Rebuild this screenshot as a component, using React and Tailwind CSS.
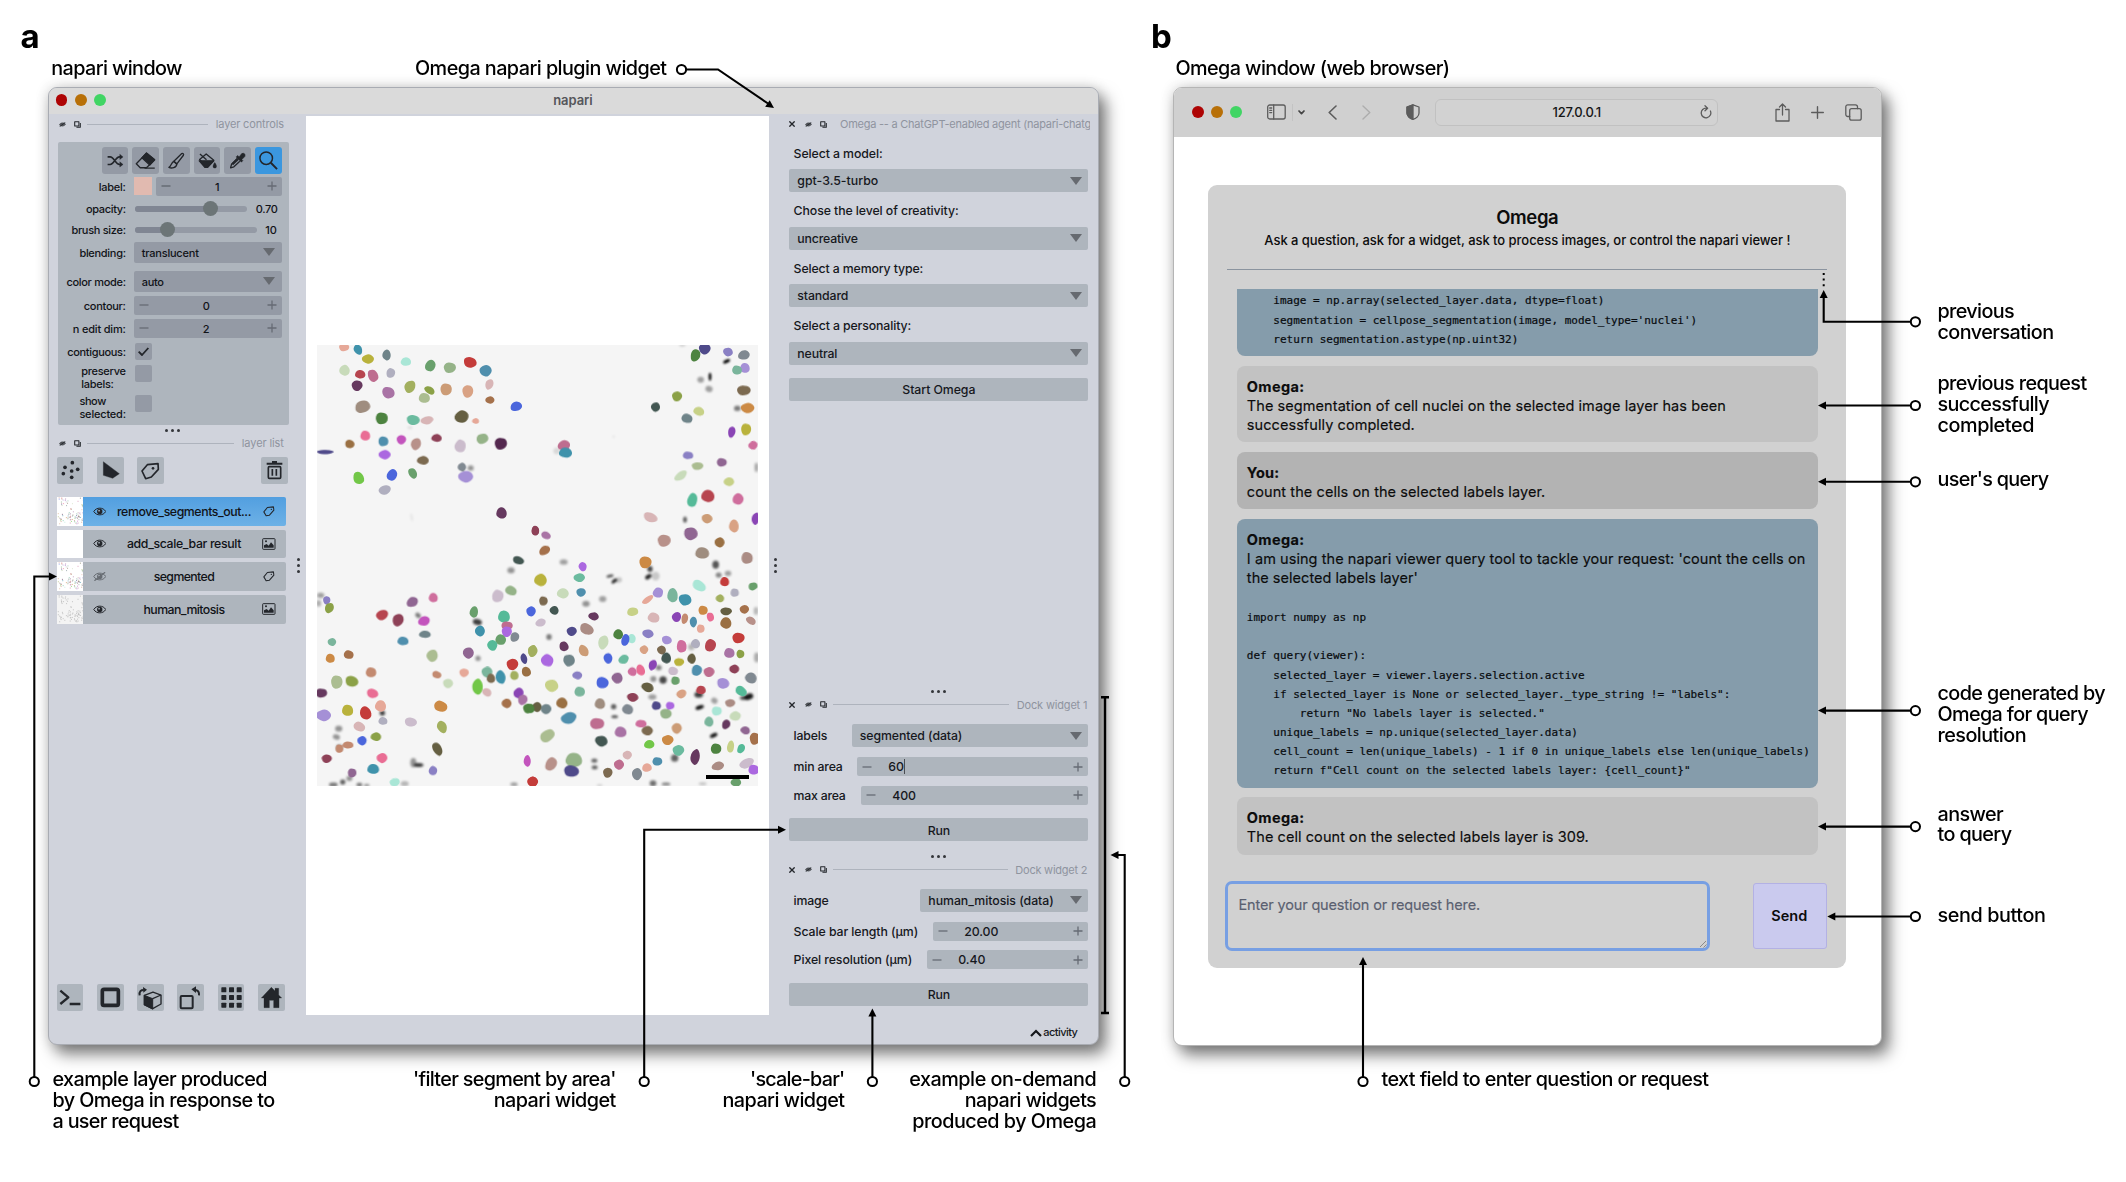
import { useLayoutEffect, useRef, useState } from "react";

const PALETTE = {
  a: "#e6a898", b: "#3f92ab", c: "#b9b23c", d: "#6f8489", e: "#a9e6d6", f: "#69a06c", g: "#95b388",
  h: "#c43c3a", i: "#4f8fad", j: "#c8dbba", k: "#b7454f", l: "#be6d8f", m: "#b0afbf", n: "#66395f",
  o: "#a973a5", p: "#a3b05f", q: "#8ba147", r: "#cc9c76", s: "#d9a284", t: "#d8b5b6", u: "#a5714b",
  v: "#4b66dc", w: "#9f8d7f", x: "#4d8340", y: "#6bbb9f", z: "#655f42", A: "#e96d94", B: "#c354bd",
  C: "#b8918a", D: "#8e4157", E: "#cbbccc", F: "#54284f", G: "#ab68e0", H: "#7c6a50", I: "#72c748",
  J: "#a590d6", K: "#cc8a45", L: "#c7d187", M: "#435752", N: "#8a80c4", O: "#4f4a8a", P: "#55ba98",
  Q: "#8a45b5", R: "#808991", S: "#9a7043", T: "#906692", U: "#cf6e9d", V: "#abbd91", W: "#c38a70",
  X: "#7ab59c", Y: "#ab8c84",
};

/* Each entry: centre x, centre y, radius x, radius y, rotation, palette key. */
const CELLS_LEFT = `132 52 14 11 0 a;174 59 11 15 -30 b;204 87 17 13 0 c;260 75 12 15 0 d;318 95 15 12 0 e;391 107 14 17 30 f;449 113 17 15 0 g;510 97 18 15 20 h;557 122 17 16 0 i;134 121 15 15 0 j;181 133 15 12 0 k;219 137 14 18 -25 l;272 129 12 14 15 m;171 167 15 15 0 n;265 188 18 16 30 o;330 170 15 18 30 p;389 181 16 10 30 q;373 204 16 14 0 V;438 178 16 17 0 r;503 184 15 18 0 s;568 163 11 15 20 t;570 210 13 10 0 u;649 229 17 13 -20 v;188 230 22 17 -20 w;245 265 17 17 0 x;339 270 18 14 10 y;381 271 18 11 -10 t;485 260 20 17 -15 z;527 273 10 8 0 a;196 317 14 14 0 A;250 334 14 14 0 i;149 342 13 12 20 S;304 329 13 13 0 B;348 342 14 17 20 C;410 324 15 11 0 D;481 348 16 18 15 E;547 326 17 14 -20 g;602 341 17 17 0 F;75 366 23 6 0 O;254 374 17 13 0 G;369 391 17 12 0 H;176 444 15 18 -20 I;276 435 14 17 30 v;338 430 11 16 -30 f;254 480 17 13 -15 m;497 440 21 16 0 J;486 411 12 12 0 R;605 549 15 16 0 n;706 602 11 13 0 D;655 691 16 11 20 M;80 811 10 12 0 N;88 834 12 15 25 q;337 816 17 13 -30 T;400 803 13 13 0 U;633 782 17 13 20 g;593 798 16 18 15 E;246 855 17 14 -20 k;294 870 15 18 20 D;372 873 17 13 -20 B;522 846 12 16 10 f;612 860 17 17 0 P;621 887 16 12 0 l;620 905 14 15 0 G;693 844 13 14 0 v;540 903 14 15 0 b;375 913 17 10 0 d;309 933 16 12 0 i;602 929 15 15 20 f;644 921 12 14 20 R;577 946 14 15 -15 P;96 936 12 11 0 X;397 977 16 17 20 V;91 985 13 13 0 K;146 974 14 12 10 u;505 969 15 16 -25 T;637 1003 16 16 0 h;672 986 9 15 -15 O;697 963 11 17 15 p;679 1025 13 14 -20 S;213 1027 15 14 0 W;410 1034 13 10 20 W;492 1028 13 12 0 a;561 1026 15 15 0 X;602 1041 14 19 -10 b;573 1045 12 13 0 H;643 1036 12 13 0 p;110 1056 16 19 0 V;155 1054 18 15 20 q;444 1060 14 13 10 j;533 1070 15 22 0 I;561 1087 14 11 30 t;656 1089 14 15 30 Q;64 1089 16 13 0 n;217 1090 16 13 20 A;668 1109 13 15 20 o;620 1120 14 13 0 u;242 1128 16 16 0 a;143 1141 16 16 0 c;422 1129 19 15 20 K;686 1135 16 14 0 x;711 1131 12 13 0 z;71 1156 21 16 0 J;197 1149 16 19 -20 h;249 1173 13 11 0 m;178 1190 17 13 25 t;332 1176 17 13 10 E;426 1191 13 18 -25 p;186 1232 13 13 0 v;228 1220 15 12 0 q;144 1245 16 10 0 W;118 1256 11 12 0 W;412 1257 12 20 -30 z;80 1286 14 12 0 D;246 1284 15 14 0 A;682 1293 10 16 0 B;220 1317 17 14 0 b;399 1322 12 13 20 N;156 1329 12 13 0 T;284 1357 14 12 -15 e;698 1355 15 14 0 h`;

const CELLS_RIGHT = `496 76 13 18 15 x;524 56 16 16 0 O;594 66 14 12 20 N;642 75 17 13 -15 R;645 114 14 14 0 J;621 120 14 13 0 X;641 181 19 14 0 H;441 199 14 14 0 q;653 234 19 14 0 K;377 231 13 13 20 M;507 244 16 12 15 L;471 265 16 13 15 d;648 298 14 17 0 c;605 306 10 16 10 Q;669 346 13 12 -15 U;102 346 18 14 -15 l;107 368 19 14 0 b;474 376 15 11 0 N;575 397 14 12 0 T;502 408 16 11 0 V;452 437 20 11 -35 j;597 455 15 12 0 L;534 498 19 17 0 k;487 510 14 20 15 P;624 507 15 16 30 U;361 562 20 13 25 t;531 566 15 13 10 r;677 566 11 17 10 Q;612 588 14 18 0 s;16 602 10 14 0 D;48 616 14 10 25 o;402 632 18 17 0 C;482 611 19 18 20 T;569 637 14 14 0 S;44 661 17 12 -35 u;517 669 20 16 0 w;651 684 16 17 0 Y;346 697 17 17 0 K;158 710 11 13 -20 G;148 743 16 12 0 y;32 750 18 17 0 c;584 755 13 13 0 h;669 769 13 11 -20 f;507 767 20 14 35 e;153 787 13 12 0 i;384 788 15 14 -30 J;99 790 17 14 0 j;428 796 15 20 0 X;614 788 12 12 0 m;40 813 12 13 0 H;353 809 18 8 -35 a;465 809 18 16 20 b;570 805 12 11 0 p;73 841 13 12 20 M;308 845 16 12 -10 L;519 841 13 13 0 K;588 844 16 11 0 z;643 838 13 12 0 u;191 859 15 11 10 n;440 861 13 14 30 Q;371 863 17 14 10 t;541 861 10 13 -15 A;464 866 9 15 10 W;490 876 10 15 0 i;32 878 15 11 -20 E;588 879 16 16 0 S;663 872 15 10 30 C;512 896 11 12 0 a;170 897 20 15 30 Y;125 904 14 13 0 O;354 911 16 12 10 N;265 913 14 14 0 x;305 926 12 13 10 e;286 930 11 17 15 v;625 924 17 15 0 h;410 930 14 12 20 J;220 937 14 20 15 j;497 941 13 13 0 m;102 949 13 14 -20 n;455 949 14 18 0 U;541 946 15 18 20 k;8 963 13 16 0 p;342 959 12 12 0 s;161 962 13 17 -30 r;395 960 13 12 30 H;598 969 15 14 0 o;631 972 11 12 0 q;234 985 12 15 -15 v;281 988 15 12 -25 y;485 986 12 14 0 z;409 984 14 15 0 M;52 991 18 17 25 G;117 991 16 17 -20 d;447 996 14 11 0 c;368 1005 11 15 20 Q;613 1017 14 12 0 D;332 1020 12 16 -20 A;307 1025 13 12 25 U;429 1023 14 12 10 E;500 1021 14 16 20 i;537 1026 15 14 0 l;142 1036 14 11 0 N;262 1044 16 15 20 T;663 1044 17 15 20 R;436 1052 12 12 0 f;217 1058 17 16 20 v;579 1060 17 15 20 J;65 1067 19 17 15 L;353 1072 18 13 20 z;513 1080 14 12 0 k;149 1085 15 14 0 X;633 1083 17 13 40 P;454 1092 14 12 -20 s;308 1102 16 12 10 D;96 1119 16 15 0 S;210 1121 15 15 0 w;379 1127 13 12 0 O;420 1127 12 11 0 G;600 1119 14 11 0 Y;48 1137 15 14 0 d;21 1131 12 13 0 z;3 1136 10 12 0 x;293 1138 16 14 20 R;560 1143 14 13 0 e;407 1151 16 14 10 g;116 1164 22 16 -15 i;616 1158 16 13 -10 j;537 1175 13 14 0 X;333 1181 16 11 0 U;201 1181 20 16 0 l;588 1183 11 14 20 n;440 1195 14 15 0 r;352 1202 16 13 0 H;646 1201 14 11 15 T;272 1206 17 15 0 o;52 1217 22 16 -35 V;674 1226 14 17 0 u;413 1230 16 14 0 K;214 1233 18 15 20 M;358 1243 15 12 -10 I;602 1250 10 17 10 L;558 1256 15 15 0 x;633 1256 10 14 25 P;445 1261 16 15 0 y;292 1275 13 12 0 t;496 1281 13 22 10 n;132 1290 24 20 0 g;382 1294 14 12 0 i;63 1302 15 20 30 C;650 1300 21 13 -25 E;267 1304 14 14 0 l;564 1308 18 12 -15 Y;351 1313 14 12 -15 a;671 1319 15 14 0 G;124 1323 21 16 10 O;233 1328 13 14 0 H;321 1332 14 17 0 R;618 1357 15 12 0 f;8 1355 14 14 0 h`;

/* Unlabelled nuclei: centre x, centre y, radius x, radius y, rotation, opacity. */
const GHOST_LEFT = `512 414 9 8 0 .4;330 293 8 4 0 .1;335 562 3 12 -10 .08;633 721 11 9 0 .4;62 796 11 8 0 .35;56 820 7 10 0 .3;354 856 9 7 40 .5;532 876 14 9 15 .75;534 985 8 8 0 .4;213 1027 8 8 0 .3;247 1149 8 8 0 .75;116 1196 11 9 0 .4;109 1221 11 8 20 .4;118 1252 10 9 0 .4;340 1298 9 14 0 .4;356 1305 14 6 0 .75;148 1345 9 8 0 .4;128 1356 8 8 0 .6;100 1364 13 7 0 .5;178 1364 9 6 0 .5;200 1366 9 4 0 .4;314 1361 12 8 0 .25;642 1363 11 6 0 .35;380 271 12 7 0 .15`;
const GHOST_RIGHT = `457 46 10 4 0 .15;590 94 11 5 -25 1;540 140 4 12 0 1;512 149 10 9 0 .35;537 177 11 9 15 .35;622 235 10 8 0 .5;80 363 10 10 0 .12;251 320 3 3 0 .12;679 412 5 14 0 .35;465 569 6 9 0 .6;101 696 12 8 0 .35;557 704 10 12 0 .65;360 717 8 9 0 .7;355 740 11 6 -35 .85;377 738 12 13 0 .18;240 738 11 4 -15 .7;253 753 10 5 -40 .85;266 750 10 8 -20 .2;594 730 10 8 0 .35;566 735 9 8 0 .45;168 821 11 9 0 .4;218 807 11 9 0 .35;57 921 8 9 0 .5;678 843 7 12 0 .25;484 951 10 10 0 .25;680 982 8 15 0 .3;399 1050 11 11 0 .7;370 1047 9 9 0 .4;386 1013 9 8 0 .45;367 1101 12 8 0 .35;553 1112 10 9 30 .35;506 1094 13 9 0 .75;656 1100 14 9 -20 .9;640 1104 10 6 0 .7;251 1130 8 8 0 .6;254 1160 10 5 0 .6;509 1132 13 6 -20 .95;551 1216 12 6 -25 .9;434 1284 11 11 0 .6;193 1292 9 6 0 .6;194 1312 9 6 0 .6;369 1360 10 9 0 .55;408 1362 13 5 0 .45;518 1361 12 5 0 .2;209 1366 9 4 0 .15`;

const parse = (s) => s.split(";").map((e) => e.trim().split(" "));

function blob(rx, ry, seed) {
  const pts = [];
  const n = 9;
  for (let k = 0; k < n; k++) {
    const t = (k / n) * Math.PI * 2;
    const wob = 1 + 0.07 * Math.sin(seed * 7.3 + k * 2.4);
    pts.push([Math.cos(t) * rx * wob, Math.sin(t) * ry * wob]);
  }
  const mid = (p, q) => [(p[0] + q[0]) / 2, (p[1] + q[1]) / 2];
  const f = (p) => `${p[0].toFixed(1)} ${p[1].toFixed(1)}`;
  let d = `M${f(mid(pts[n - 1], pts[0]))}`;
  for (let k = 0; k < n; k++) d += `Q${f(pts[k])} ${f(mid(pts[k], pts[(k + 1) % n]))}`;
  return d + "Z";
}

function Cells({ data }) {
  return parse(data).map(([x, y, rx, ry, rot, c], k) => (
    <path key={k} d={blob(rx * 1.13, ry * 1.13, k + 1)} fill={PALETTE[c]} transform={`translate(${x} ${y}) rotate(${rot})`} />
  ));
}

function Ghosts({ data }) {
  return parse(data).map(([x, y, rx, ry, rot, o], k) => (
    <ellipse key={k} rx={rx} ry={ry} fill="#000" opacity={o} transform={`translate(${x} ${y}) rotate(${rot})`} />
  ));
}

function Micrograph() {
  return (
    <svg className="block h-[441px] w-[441px] bg-[#f5f5f5]" viewBox="0 0 1323 1323">
      <defs>
        <filter id="soft" x="-10%" y="-10%" width="120%" height="120%"><feGaussianBlur stdDeviation="3.5" /></filter>
      </defs>
      <g transform="translate(-51 -45)"><g filter="url(#soft)"><Ghosts data={GHOST_LEFT} /></g><Cells data={CELLS_LEFT} /></g>
      <g transform="translate(639 -45)"><g filter="url(#soft)"><Ghosts data={GHOST_RIGHT} /></g><Cells data={CELLS_RIGHT} /></g>
      <rect x="1167" y="1290" width="129" height="12" fill="#000" />
    </svg>
  );
}

/* Text run tracked so that it spans exactly `w` pixels. */
function T({ w, className = "", children }) {
  const ref = useRef(null);
  const [track, setTrack] = useState(0);
  useLayoutEffect(() => {
    const el = ref.current;
    el.style.letterSpacing = "0px";
    const natural = el.getBoundingClientRect().width;
    const next = (w - natural) / children.length;
    el.style.letterSpacing = `${next}px`;
    setTrack(next);
  }, [w, children]);
  return (
    <span ref={ref} className={`inline-block whitespace-pre ${className}`} style={{ letterSpacing: `${track}px` }}>
      {children}
    </span>
  );
}

function Dots({ vertical }) {
  return (
    <span className={vertical ? "flex flex-col gap-[3px]" : "flex justify-center gap-[3px]"}>
      <i className="size-[3px] rounded-full bg-[#33353a]" />
      <i className="size-[3px] rounded-full bg-[#33353a]" />
      <i className="size-[3px] rounded-full bg-[#33353a]" />
    </span>
  );
}

function Glyph({ box, className = "size-full", children }) {
  return (
    <svg viewBox={box} className={`block ${className}`} fill="none" stroke="#23262b" strokeWidth="5" strokeLinejoin="round">
      {children}
    </svg>
  );
}

function DockIcons({ close }) {
  return (
    <span className="flex items-center">
      {close && (
        <Glyph box="0 0 18 18" className="mr-[9.4px] size-[6px]"><path d="M1 1L17 17M17 1L1 17" strokeWidth="4" /></Glyph>
      )}
      <Glyph box="0 0 21 15" className="h-[5px] w-[7px]">
        <path d="M1 8C5 1 16 1 20 7C16 14 5 14 1 8Z" fill="#55585e" strokeWidth="1" /><path d="M2 14L19 1" strokeWidth="2.5" />
      </Glyph>
      <Glyph box="0 0 20 20" className="ml-[8.3px] size-[7px]"><rect x="2" y="2" width="12" height="12" strokeWidth="3" /><path d="M7 18H18V6" strokeWidth="3" /></Glyph>
    </span>
  );
}

function DockHeader({ close, title, w, line = true, className = "" }) {
  return (
    <div className={`flex items-center ${className}`}>
      <DockIcons close={close} />
      {line && <i className="ml-[6px] h-px flex-1 bg-[#aeb3bd]" />}
      <span className={line ? "ml-[7.5px] flex pt-[1px] text-[11px] leading-[13px] text-[#8f949f]" : "ml-[13px] flex pt-[1px] text-[11px] leading-[13px] text-[#8f949f]"}>
        <T w={w}>{title}</T>
      </span>
    </div>
  );
}

function Triangle({ className = "" }) {
  return <svg viewBox="0 0 12 8" className={`h-[8px] w-[12px] ${className}`}><path d="M0 0H12L6 8Z" fill="#666a70" /></svg>;
}

function Minus() {
  return <svg viewBox="0 0 10 10" className="size-[10px]"><path d="M.5 5H9.5" stroke="#666b74" strokeWidth="1.3" /></svg>;
}
function Plus() {
  return <svg viewBox="0 0 10 10" className="size-[10px]"><path d="M.5 5H9.5M5 .5V9.5" stroke="#666b74" strokeWidth="1.3" /></svg>;
}

function Row({ label, w, className, children }) {
  return (
    <div className={`flex items-center ${className}`}>
      <span className="flex w-[68px] justify-end pt-[0.7px]"><T w={w}>{label}</T></span>
      <span className="ml-[8px] flex h-full w-[148px] items-center">{children}</span>
    </div>
  );
}

function SmallSelect({ value, w }) {
  return (
    <span className="flex h-full flex-1 items-center justify-between rounded-[2px] bg-[#949aa5] pr-[6.5px] pl-[8px]">
      <T w={w} className="pt-[0.7px]">{value}</T><Triangle />
    </span>
  );
}

function SmallSpin({ value }) {
  return (
    <span className="flex h-full flex-1 items-center justify-between rounded-[2px] bg-[#949aa5] px-[5px]">
      <Minus /><span className="pt-[0.7px] pr-[3px]">{value}</span><Plus />
    </span>
  );
}

function Check({ on }) {
  return (
    <span className="ml-[1px] size-[17px] rounded-[2px] bg-[#949aa5]">
      {on && <Glyph box="0 0 51 51"><path d="M11 26L21 36L40 15" strokeWidth="5.5" /></Glyph>}
    </span>
  );
}

function Slider({ fill, className }) {
  return (
    <span className={`relative ml-[1px] flex h-[6px] items-center rounded-full bg-[#949aa5] ${className}`}>
      <i className={`h-full rounded-full bg-[#808693] ${fill}`} />
      <i className="-ml-[8px] size-[15px] shrink-0 rounded-full bg-[#6c7577]" />
    </span>
  );
}

const TOOLS = [
  ["304 441 81 81", <g key="g" strokeWidth="5"><path d="M321 471H329C340 471 345 494 357 494H363M321 494H329C340 494 345 471 357 471H363" /><path d="M358 463L368 471L358 479ZM358 486L368 494L358 502Z" fill="#23262b" strokeWidth="1" /></g>],
  ["396 441 81 81", <g key="g" strokeWidth="4"><path d="M409 492L440 460L464 480L440 504H421Z" /><path d="M426 474L440 459L465 480L450 496Z" fill="#23262b" /><path d="M434 505H465" /></g>],
  ["488 441 81 81", <g key="g" strokeWidth="4"><path d="M521 484L545 461C548 459 552 462 550 466L530 492Z" /><path d="M521 485C513 487 514 499 506 503C514 507 529 504 530 493Z" /></g>],
  ["580 441 81 81", <g key="g" strokeWidth="4"><path d="M597 479L617 462L640 481L620 502Z" /><path d="M596 483H640L621 503H613Z" fill="#23262b" /><path d="M598 462L618 480" /><path d="M643 488C636 497 636 505 643 505C650 505 650 497 643 488Z" fill="#23262b" strokeWidth="1" /></g>],
  ["672 441 81 81", <g key="g" strokeWidth="4"><path d="M712 476L695 493L692 504L702 501L720 484" /><path d="M709 471L725 487L729 482L726 479L735 470C738 463 733 458 726 461L718 471L714 467Z" fill="#23262b" strokeWidth="2" /><path d="M697 494L715 477" strokeWidth="7" /></g>],
  ["765 441 81 81", <g key="g" strokeWidth="4.5"><circle cx="799" cy="475" r="19" /><path d="M813 489L832 508" strokeWidth="6" /></g>],
];

function LayerControls() {
  return (
    <div className="mt-[8.3px] ml-[9.4px] h-[282.4px] w-[231.3px] rounded-[2px] bg-[#aeb5bd] pt-[4.7px] text-[11px] leading-[12.5px] font-medium text-[#111318]">
      <div className="flex justify-end gap-[4px] pr-[7.3px]">
        {TOOLS.map(([box, art], k) => (
          <span key={k} className={k === 5 ? "size-[26.7px] rounded-[3px] bg-[#3b97df]" : "size-[26.7px] rounded-[3px] bg-[#949aa5]"}>
            <Glyph box={box}>{art}</Glyph>
          </span>
        ))}
      </div>
      <Row label="label:" w={27} className="mt-[3.3px] h-[19px]">
        <i className="h-[18px] w-[18.5px] bg-[#e1bab0]" />
        <span className="ml-[3.7px] flex h-full flex-1"><SmallSpin value="1" /></span>
      </Row>
      <Row label="opacity:" w={39.7} className="mt-[5.2px] h-[15px]">
        <Slider className="w-[112px]" fill="w-[76.7px]" /><T w={22} className="ml-[9px] pt-[0.7px]">0.70</T>
      </Row>
      <Row label="brush size:" w={54.3} className="mt-[6px] h-[15px]">
        <Slider className="w-[122px]" fill="w-[33.5px]" /><T w={11.5} className="ml-[8.5px] pt-[0.7px]">10</T>
      </Row>
      <Row label="blending:" w={46.3} className="mt-[4.8px] h-[21px]"><SmallSelect value="translucent" w={57} /></Row>
      <Row label="color mode:" w={59.3} className="mt-[8px] h-[21px]"><SmallSelect value="auto" w={22} /></Row>
      <Row label="contour:" w={42} className="mt-[4px] h-[19px]"><SmallSpin value="0" /></Row>
      <Row label="n edit dim:" w={53} className="mt-[4px] h-[19px]"><SmallSpin value="2" /></Row>
      <Row label="contiguous:" w={58.5} className="mt-[5px] h-[17px]"><Check on /></Row>
      <div className="mt-[5.5px] flex h-[25px]">
        <span className="flex w-[68px] flex-col items-start pl-[23.5px]"><T w={44.5}>preserve</T><T w={32.5}>labels:</T></span>
        <span className="ml-[8px] flex"><Check /></span>
      </div>
      <div className="mt-[4.2px] flex h-[25px]">
        <span className="flex w-[68px] flex-col items-start pt-[0.7px] pl-[21.7px]"><T w={26.5}>show</T><T w={46.5}>selected:</T></span>
        <span className="ml-[8px] flex"><Check /></span>
      </div>
    </div>
  );
}

function Eye({ off }) {
  return (
    <Glyph box="0 0 40 27" className={off ? "h-[9px] w-[13.5px] opacity-50" : "h-[9px] w-[13.5px]"}>
      <path d="M2 13.5C10 0 30 0 38 13.5C30 27 10 27 2 13.5Z" strokeWidth="3" />
      <circle cx="20" cy="13.5" r="8" fill="#23262b" strokeWidth="0" /><circle cx="18" cy="11" r="2.5" fill="#aeb5bd" strokeWidth="0" />
      {off && <path d="M4 26L36 1" strokeWidth="4" />}
    </Glyph>
  );
}

function TagIcon({ className }) {
  return (
    <Glyph box="0 0 56 50" className={className}>
      <path d="M4 28L21 7L50 4L52 20L31 44L15 47Z" strokeWidth="5" /><circle cx="40" cy="16" r="3.5" fill="#23262b" strokeWidth="0" />
    </Glyph>
  );
}

function PictureIcon() {
  return (
    <Glyph box="0 0 41 36" className="h-[12px] w-[13.7px]">
      <rect x="2" y="2" width="37" height="32" rx="2" strokeWidth="3" />
      <path d="M6 29V22L14 18L20 23L27 13L35 22V29Z" fill="#23262b" strokeWidth="0" /><circle cx="12" cy="10" r="3" fill="#23262b" strokeWidth="0" />
    </Glyph>
  );
}

function Thumb({ kind }) {
  const keys = Object.keys(PALETTE);
  const all = parse(CELLS_LEFT).map((c) => [c[0] - 51, c[1] - 45]).concat(parse(CELLS_RIGHT).map((c) => [+c[0] + 639, c[1] - 45]));
  return (
    <svg viewBox="0 0 1323 1400" preserveAspectRatio="none" className={kind === "gray" ? "h-full w-[26.7px] bg-[#f4f4f4]" : "h-full w-[26.7px] bg-white"}>
      {kind !== "blank" && all.filter((_, k) => k % 3 === 0).map(([x, y], k) => (
        <rect key={k} x={x} y={y} width="52" height="52" opacity=".55" fill={kind === "gray" ? "#a5a5a5" : PALETTE[keys[(k * 7) % keys.length]]} />
      ))}
    </svg>
  );
}

function Layer({ name, w, off, tag, thumb, active }) {
  return (
    <div className="flex h-[28.6px] w-[229.7px]">
      <Thumb kind={thumb} />
      <div className={active
        ? "flex flex-1 items-center rounded-r-[2px] bg-linear-to-b from-[#529fe0] to-[#6db1e6] pr-[10px] pl-[9.7px]"
        : "flex flex-1 items-center rounded-r-[2px] bg-[#aeb5bd] pr-[10px] pl-[9.7px]"}>
        <Eye off={off} />
        <span className="flex flex-1 justify-center pt-[1.2px] pr-[0.8px] text-[12.3px] font-medium text-[#111318]"><T w={w}>{name}</T></span>
        <span className="flex w-[14px] justify-center">{tag ? <TagIcon className="h-[10.5px] w-[11.7px]" /> : <PictureIcon />}</span>
      </div>
    </div>
  );
}

function ToolButton({ box, children, className = "" }) {
  return <span className={`size-[26.7px] rounded-[2px] bg-[#aeb5bd] ${className}`}><Glyph box={box}>{children}</Glyph></span>;
}

function LeftDock() {
  const fill = "#23262b";
  return (
    <div className="flex w-[257.5px] flex-col">
      <DockHeader title="layer controls" w={68} className="h-[20px] pr-[22px] pl-[10.7px]" />
      <LayerControls />
      <div className="flex h-[12.3px] items-center pl-[117px]"><Dots /></div>
      <DockHeader title="layer list" w={42} className="h-[13px] pr-[22px] pl-[10.7px]" />
      <div className="mt-[7px] flex gap-[13.6px] pl-[8.3px]">
        <ToolButton box="0 0 80 80"><g fill={fill} strokeWidth="0"><circle cx="46" cy="17" r="5.5" /><circle cx="24" cy="31" r="5.5" /><circle cx="62" cy="37" r="5.5" /><circle cx="19" cy="50" r="5.5" /><circle cx="44" cy="42" r="5.5" /><circle cx="44" cy="61" r="5.5" /></g></ToolButton>
        <ToolButton box="0 0 80 80"><path d="M19 14L67 50L47 64L19 55Z" fill={fill} strokeWidth="1" /></ToolButton>
        <ToolButton box="0 0 80 80"><path d="M15 42L31 23L63 20L64 37L43 60L26 65Z" /><circle cx="48" cy="34" r="4" fill={fill} strokeWidth="0" /></ToolButton>
        <ToolButton box="0 0 80 80" className="ml-[84px]"><path d="M17 20H64M33 15H48" strokeWidth="6" /><rect x="22" y="29" width="37" height="35" rx="3" /><path d="M34 36V56M46 36V56" strokeWidth="5" /></ToolButton>
      </div>
      <div className="mt-[13.3px] flex flex-col gap-[4.1px] pl-[8.3px]">
        <Layer name="remove_segments_out..." w={134} tag thumb="color" active />
        <Layer name="add_scale_bar result" w={114} thumb="blank" />
        <Layer name="segmented" w={60.5} off tag thumb="color" />
        <Layer name="human_mitosis" w={81} thumb="gray" />
      </div>
      <div className="mt-auto mb-[32.9px] flex gap-[13.6px] pl-[8.3px]">
        <ToolButton box="0 0 80 80"><path d="M10 20L34 40L10 60M38 60H70" strokeWidth="7" /></ToolButton>
        <ToolButton box="0 0 80 80"><rect x="16" y="16" width="48" height="48" rx="5" strokeWidth="11" /></ToolButton>
        <ToolButton box="0 0 80 80"><path d="M22 34L48 24L72 33V60L47 74L22 62Z" strokeWidth="4" /><path d="M22 34L47 44V75L22 62Z" fill={fill} strokeWidth="3" /><path d="M47 44L72 33" strokeWidth="4" /><path d="M8 34C6 22 12 18 20 18" strokeWidth="6" /><path d="M18 9L30 17L19 26Z" fill={fill} strokeWidth="0" /></ToolButton>
        <ToolButton box="0 0 80 80"><rect x="11" y="36" width="36" height="37" rx="3" strokeWidth="6" /><path d="M66 34C67 22 62 19 56 18" strokeWidth="6" /><path d="M57 7L43 16L57 27Z" fill={fill} strokeWidth="0" /></ToolButton>
        <ToolButton box="0 0 80 80"><g fill={fill} strokeWidth="0">{[10, 33, 56].map((y) => [10, 33, 56].map((x) => <rect key={`${x}-${y}`} x={x} y={y} width="15" height="15" rx="2" />))}</g></ToolButton>
        <ToolButton box="0 0 80 80"><path d="M10 42L40 10L51 21V13H62V33L71 42H63V71H47V49H34V71H18V42Z" fill={fill} strokeWidth="1" /></ToolButton>
      </div>
    </div>
  );
}

function Select({ value, w, className = "" }) {
  return (
    <span className={`flex h-[23px] items-center justify-between rounded-[2px] bg-[#aeb5bd] pr-[6.5px] pl-[8px] ${className}`}>
      <T w={w}>{value}</T><Triangle />
    </span>
  );
}

function Spin({ value, w, caret, className = "" }) {
  return (
    <span className={`flex h-[19.3px] items-center rounded-[2px] bg-[#aeb5bd] px-[5px] ${className}`}>
      <Minus /><T w={w} className="ml-[16px]">{value}</T>
      {caret && <i className="h-[15px] w-px bg-[#4a4d52]" />}
      <span className="ml-auto"><Plus /></span>
    </span>
  );
}

function Button({ children, w, className = "" }) {
  return <span className={`flex h-[23px] w-[299px] items-center justify-center rounded-[2px] bg-[#aeb5bd] pt-[1px] ${className}`}><T w={w}>{children}</T></span>;
}

function Field({ label, w, className, children }) {
  return <div className={`flex w-[299px] items-center justify-between pl-[4.3px] ${className}`}><T w={w}>{label}</T>{children}</div>;
}

function RightDock() {
  return (
    <div className="flex flex-1 flex-col pl-[20px] text-[12.3px] leading-[15px] font-medium text-[#16181d]">
      <div className="w-[301px] overflow-hidden font-normal">
        <DockHeader close line={false} title="Omega -- a ChatGPT-enabled agent (napari-chatg" w={251} className="h-[20px]" />
      </div>
      <span className="mt-[11.8px] flex pl-[4.3px]"><T w={89}>Select a model:</T></span>
      <Select value="gpt-3.5-turbo" w={81} className="mt-[8.3px] w-[299px]" />
      <span className="mt-[11.2px] flex pl-[4.3px]"><T w={165}>Chose the level of creativity:</T></span>
      <Select value="uncreative" w={60.5} className="mt-[8.4px] w-[299px]" />
      <span className="mt-[11.4px] flex pl-[4.3px]"><T w={129.5}>Select a memory type:</T></span>
      <Select value="standard" w={51} className="mt-[8.2px] w-[299px]" />
      <span className="mt-[10.9px] flex pl-[4.3px]"><T w={117.5}>Select a personality:</T></span>
      <Select value="neutral" w={40} className="mt-[8.4px] w-[299px]" />
      <Button w={73} className="mt-[13px]">Start Omega</Button>

      <div className="mt-[284.5px] flex h-[13px] w-[299px] items-center justify-center"><Dots /></div>
      <DockHeader close title="Dock widget 1" w={70.5} className="h-[13px] w-[298px] font-normal" />
      <Field label="labels" w={33.5} className="mt-[13.2px]"><Select value="segmented (data)" w={102.5} className="w-[236.5px]" /></Field>
      <Field label="min area" w={49} className="mt-[9.8px]"><Spin value="60" w={15.5} caret className="w-[231px]" /></Field>
      <Field label="max area" w={52} className="mt-[9.2px]"><Spin value="400" w={23.5} className="w-[227px]" /></Field>
      <Button w={22} className="mt-[13.4px]">Run</Button>

      <div className="mt-[9px] flex h-[13px] w-[299px] items-center justify-center"><Dots /></div>
      <DockHeader close title="Dock widget 2" w={72} className="h-[13px] w-[298px] font-normal" />
      <Field label="image" w={35} className="mt-[12.8px]"><Select value="human_mitosis (data)" w={125.5} className="w-[168px]" /></Field>
      <Field label="Scale bar length (µm)" w={124.5} className="mt-[9.6px]"><Spin value="20.00" w={34} className="w-[155px]" /></Field>
      <Field label="Pixel resolution (µm)" w={118.5} className="mt-[9.3px]"><Spin value="0.40" w={27} className="w-[161px]" /></Field>
      <Button w={22} className="mt-[13.3px]">Run</Button>
      <div className="mt-[19px] flex items-center pl-[241px] text-[11px]">
        <svg viewBox="0 0 12 8" className="mt-[2px] h-[8px] w-[12px]"><path d="M1 7L6 2L11 7" fill="none" stroke="#15171b" strokeWidth="2.2" /></svg>
        <T w={34} className="ml-[1px]">activity</T>
      </div>
    </div>
  );
}

function NapariWindow() {
  return (
    <section className="flex h-[957.5px] w-[1051px] flex-col overflow-hidden rounded-[9px] border border-[#a9acb3] bg-[#d0d3dc] shadow-[7px_9px_16px_rgba(0,0,0,0.5),0_0_14px_rgba(0,0,0,0.16)]">
      <header className="flex h-[26px] shrink-0 items-center bg-[#dadada] pb-[1.5px] pl-[6.4px]">
        <i className="size-[11.7px] rounded-full bg-[#ae0404]" />
        <i className="ml-[7.5px] size-[11.7px] rounded-full bg-[#b87008]" />
        <i className="ml-[7.5px] size-[11.7px] rounded-full bg-[#41d564]" />
        <span className="ml-[447.4px] flex text-[13px] font-semibold text-[#55565a]"><T w={39.5}>napari</T></span>
      </header>
      <div className="-mx-px flex flex-1">
        <LeftDock />
        <div className="relative mt-[2px] mb-[29px] flex w-[463.5px] flex-col bg-white pt-[229px] pl-[11.5px]">
          <Micrograph />
          <span className="absolute top-[441.5px] -left-[8.5px]"><Dots vertical /></span>
          <span className="absolute top-[441.5px] -right-[8px]"><Dots vertical /></span>
        </div>
        <RightDock />
      </div>
    </section>
  );
}

function BrowserBar() {
  const s = { fill: "none", stroke: "#5c5c5c", strokeWidth: 1.3, strokeLinecap: "round", strokeLinejoin: "round" };
  return (
    <header className="flex h-[49px] shrink-0 items-center bg-[#d0d0d0] pb-[1px] pl-[17.7px]">
      <i className="size-[12px] rounded-full bg-[#ae0404]" />
      <i className="ml-[7px] size-[12px] rounded-full bg-[#b87008]" />
      <i className="ml-[7px] size-[12px] rounded-full bg-[#41d564]" />
      <svg className="ml-[25px] h-[16px] w-[19px]" viewBox="0 0 19 16" {...s}><rect x=".7" y="1" width="17.5" height="14" rx="2" /><path d="M6.7 1V15M2.7 4H4.7M2.7 6.3H4.7M2.7 8.6H4.7" /></svg>
      <i className="ml-[6.5px] h-[17px] w-px bg-[#c3c3c3]" />
      <svg className="ml-[5px] h-[5px] w-[7px]" viewBox="0 0 7 5" {...s} strokeWidth="1.7" stroke="#444"><path d="M1 1L3.5 3.7L6 1" /></svg>
      <svg className="ml-[23px] h-[15px] w-[9px]" viewBox="0 0 9 15" {...s} strokeWidth="1.6"><path d="M8 1L1.2 7.5L8 14" /></svg>
      <svg className="ml-[25px] h-[15px] w-[9px]" viewBox="0 0 9 15" {...s} strokeWidth="1.4" stroke="#adadad"><path d="M1 1L7.8 7.5L1 14" /></svg>
      <svg className="ml-[34.5px] h-[16px] w-[14px]" viewBox="0 0 14 16" {...s}><path d="M7 .8L13 3V9C13 12 10 14.5 7 15.3C4 14.5 1 12 1 9V3Z" /><path d="M7 .8V15.3C4 14.5 1 12 1 9V3Z" fill="#5c5c5c" /></svg>
      <div className="ml-[15px] flex h-[27px] w-[283px] items-center rounded-[6px] border border-[#c1c1c1] bg-[#d2d2d2] pr-[4.5px]">
        <span className="ml-[116.5px] flex pt-[1.5px] text-[13px] font-medium text-[#151515]"><T w={48.5}>127.0.0.1</T></span>
        <svg className="ml-auto h-[14px] w-[12px]" viewBox="0 0 12 14" {...s}><path d="M10.4 6A4.8 4.8 0 1 1 6.5 3.2M5 .8L7.6 3.2L5 5.8" /></svg>
      </div>
      <svg className="ml-[57px] h-[19px] w-[15px]" viewBox="0 0 15 19" {...s}><path d="M4.5 6.5H1V18H14V6.5H10.5M7.5 12V1M4.5 4L7.5 1L10.5 4" /></svg>
      <svg className="ml-[21px] size-[13px]" viewBox="0 0 13 13" {...s} strokeWidth="1.4"><path d="M.7 6.5H12.3M6.5 .7V12.3" /></svg>
      <svg className="ml-[21.5px] size-[17px]" viewBox="0 0 17 17" {...s}><rect x="4.7" y="4.7" width="11.5" height="11.5" rx="2" /><path d="M4.7 12.5H3A2 2 0 0 1 .8 10.5V3A2 2 0 0 1 3 .8H10.5A2 2 0 0 1 12.5 3V4.7" /></svg>
    </header>
  );
}

const CODE_A = ["    image = np.array(selected_layer.data, dtype=float)", "    segmentation = cellpose_segmentation(image, model_type='nuclei')", "    return segmentation.astype(np.uint32)"];
const CODE_B = [
  "import numpy as np", " ", "def query(viewer):", "    selected_layer = viewer.layers.selection.active",
  "    if selected_layer is None or selected_layer._type_string != \"labels\":", "        return \"No labels layer is selected.\"",
  "    unique_labels = np.unique(selected_layer.data)", "    cell_count = len(unique_labels) - 1 if 0 in unique_labels else len(unique_labels)",
  "    return f\"Cell count on the selected labels layer: {cell_count}\"",
];

function Code({ lines, className = "" }) {
  return (
    <div className={`font-['DejaVu_Sans_Mono',monospace] text-[11px] leading-[19.2px] text-[#080b0e] [-webkit-text-stroke:0.2px_#080b0e] ${className}`}>
      {lines.map((l, k) => <p key={k} className="h-[19.2px] whitespace-pre">{l}</p>)}
    </div>
  );
}

function Message({ who, w, lines, className, children }) {
  return (
    <article className={`mx-auto w-[580.5px] shrink-0 rounded-[8px] pt-[10.8px] pl-[9.8px] text-[14.5px] leading-[19.2px] text-[#0c0c0c] [-webkit-text-stroke:0.15px] ${className}`}>
      <p className="flex font-bold"><T w={w}>{who}</T></p>
      {lines.map(([text, lw]) => <p key={text} className="flex"><T w={lw}>{text}</T></p>)}
      {children}
    </article>
  );
}

function BrowserWindow() {
  return (
    <section className="flex h-[959px] w-[708.5px] flex-col overflow-hidden rounded-[9px] border border-[#b5b5b5] bg-white shadow-[7px_9px_16px_rgba(0,0,0,0.5),0_0_14px_rgba(0,0,0,0.16)]">
      <BrowserBar />
      <main className="mt-[48px] ml-[34px] flex h-[782.7px] w-[638px] flex-col rounded-[9px] bg-[#d1d1d1]">
        <h1 className="mt-[20.3px] flex justify-center text-[18.5px] leading-[24px] font-semibold text-[#0c0c0c]"><T w={62}>Omega</T></h1>
        <p className="mt-[2.7px] flex justify-center text-[13px] leading-[17px] font-medium text-[#0c0c0c]"><T w={526}>Ask a question, ask for a widget, ask to process images, or control the napari viewer !</T></p>
        <hr className="mx-auto mt-[20px] w-[600px] border-t border-[#8b949f]" />
        <div className="mx-auto mt-[19px] h-[67px] w-[580.5px] shrink-0 rounded-b-[8px] bg-[#859cab] pt-[2.5px] pl-[9.8px]"><Code lines={CODE_A} /></div>
        <Message who="Omega:" w={57.5} className="mt-[10px] h-[76.3px] bg-[#c2c2c2]" lines={[["The segmentation of cell nuclei on the selected image layer has been", 479], ["successfully completed.", 168]]} />
        <Message who="You:" w={32.5} className="mt-[9.8px] h-[57.4px] bg-[#b3b3b3]" lines={[["count the cells on the selected labels layer.", 298.5]]} />
        <Message who="Omega:" w={57.5} className="mt-[9.6px] h-[268.5px] bg-[#859cab]" lines={[["I am using the napari viewer query tool to tackle your request: 'count the cells on", 558.5], ["the selected labels layer'", 171]]}>
          <Code lines={CODE_B} className="mt-[20.5px]" />
        </Message>
        <Message who="Omega:" w={57.5} className="mt-[9.6px] h-[57.4px] bg-[#c2c2c2]" lines={[["The cell count on the selected labels layer is 309.", 342]]} />
        <div className="mt-[26px] flex items-center pl-[16.7px]">
          <div className="relative h-[70.5px] w-[485px] rounded-[7px] border-[3px] border-[#779fe3] pt-[12.5px] pl-[10.5px] text-[14.5px] leading-[18px] text-[#5a6070] [-webkit-text-stroke:0.15px]">
            <T w={241.5}>Enter your question or request here.</T>
            <svg className="absolute right-0 bottom-0 size-[8px]" viewBox="0 0 8 8" stroke="#777" strokeWidth=".8"><path d="M1 7L7 1M4.5 7.5L7.5 4.5" /></svg>
          </div>
          <div className="ml-[43px] flex h-[66px] w-[74.5px] items-center justify-center rounded-[3px] border border-[#b3b1e4] bg-[#cacaee] pt-[1px] pr-[2px] text-[14.5px] font-semibold text-[#0c0c0c]"><T w={36}>Send</T></div>
        </div>
      </main>
    </section>
  );
}

function Callout({ className, lines }) {
  return (
    <div className={`absolute flex flex-col text-[19.8px] leading-[20.8px] font-medium ${className}`}>
      {lines.map(([text, w]) => <T key={text} w={w}>{text}</T>)}
    </div>
  );
}

const HEADS = { l: "M0 0L8 -4V4Z", r: "M0 0L-8 -4V4Z", u: "M0 0L-4 8H4Z", d: "M0 0L-4 -8H4Z" };

function Pointer({ path, tip, dir, angle = 0, dot }) {
  return (
    <g>
      <path d={path} fill="none" stroke="#000" strokeWidth="2.1" />
      <path d={HEADS[dir]} transform={`translate(${tip}) rotate(${angle})`} fill="#000" />
      <circle cx={dot[0]} cy={dot[1]} r="4.6" fill="#fff" stroke="#000" strokeWidth="2" />
    </g>
  );
}

function Annotations() {
  const right = [[405.5, 1818], [481.8, 1818], [710.6, 1818], [826.6, 1818], [916.5, 1827.3]];
  return (
    <>
      <svg className="pointer-events-none absolute inset-0 h-[1182px] w-[2126px]" viewBox="0 0 2126 1182">
        <Pointer path="M681.5 69.5H718L768 103.5" tip="774 108" dir="r" angle={35} dot={[681.5, 69.5]} />
        <Pointer path="M34.3 1081V576.5H50" tip="57 576.5" dir="r" dot={[34.3, 1081.5]} />
        <Pointer path="M644.2 1081V829.7H780" tip="786 829.7" dir="r" dot={[644.2, 1081.5]} />
        <Pointer path="M872.4 1081V1014" tip="872.4 1008.5" dir="u" dot={[872.4, 1081.5]} />
        <Pointer path="M1124.7 1081V855H1117" tip="1110.5 855" dir="l" dot={[1124.7, 1081.5]} />
        <path d="M1101 697.3H1109M1101 1013H1109M1105 697.3V1013" stroke="#000" strokeWidth="2.4" />
        <Pointer path="M1363 1081V962" tip="1363 957" dir="u" dot={[1363, 1081.5]} />
        <Pointer path="M1915.4 321.8H1823.7V296" tip="1823.7 290" dir="u" dot={[1915.4, 321.8]} />
        <path d="M1823.7 273V287" stroke="#000" strokeWidth="2" strokeDasharray="2 3.6" />
        {right.map(([y, x]) => <Pointer key={y} path={`M1915 ${y}H${x + 6}`} tip={`${x} ${y}`} dir="l" dot={[1915.4, y]} />)}
      </svg>
      <span className="absolute top-[15.5px] left-[20.5px] text-[33px] leading-[40px] font-bold">a</span>
      <span className="absolute top-[15.5px] left-[1151px] text-[33px] leading-[40px] font-bold">b</span>
      <Callout className="top-[58.4px] left-[51.3px]" lines={[["napari window", 130.5]]} />
      <Callout className="top-[58.4px] left-[415px]" lines={[["Omega napari plugin widget", 251.5]]} />
      <Callout className="top-[58.4px] left-[1175.5px]" lines={[["Omega window (web browser)", 274]]} />
      <Callout className="top-[1069.3px] left-[52.5px] items-start" lines={[["example layer produced", 214.5], ["by Omega in response to", 222], ["a user request", 126]]} />
      <Callout className="top-[1069.3px] right-[1510.3px] items-end" lines={[["'filter segment by area'", 202.7], ["napari widget", 122]]} />
      <Callout className="top-[1069.3px] right-[1281.5px] items-end" lines={[["'scale-bar'", 94.5], ["napari widget", 122]]} />
      <Callout className="top-[1069.3px] right-[1029.8px] items-end" lines={[["example on-demand", 187], ["napari widgets", 131.5], ["produced by Omega", 184]]} />
      <Callout className="top-[1069.3px] left-[1381.5px]" lines={[["text field to enter question or request", 327]]} />
      <Callout className="top-[301.3px] left-[1937.5px] items-start" lines={[["previous", 76.5], ["conversation", 116]]} />
      <Callout className="top-[373.4px] left-[1937.5px] items-start" lines={[["previous request", 149], ["successfully", 111.5], ["completed", 96.5]]} />
      <Callout className="top-[469.2px] left-[1937.5px] items-start" lines={[["user's query", 111]]} />
      <Callout className="top-[683.3px] left-[1937.5px] items-start" lines={[["code generated by", 167.5], ["Omega for query", 150.5], ["resolution", 88.5]]} />
      <Callout className="top-[803.7px] left-[1937.5px] items-start" lines={[["answer", 65.5], ["to query", 74]]} />
      <Callout className="top-[904.8px] left-[1937.5px] items-start" lines={[["send button", 108]]} />
    </>
  );
}

export default function App() {
  return (
    <div className="relative h-[1182px] w-[2126px] overflow-hidden bg-white font-['Inter',sans-serif] text-black">
      <div className="flex items-start gap-[74px] pt-[87px] pl-[48.3px]">
        <NapariWindow />
        <BrowserWindow />
      </div>
      <Annotations />
    </div>
  );
}
